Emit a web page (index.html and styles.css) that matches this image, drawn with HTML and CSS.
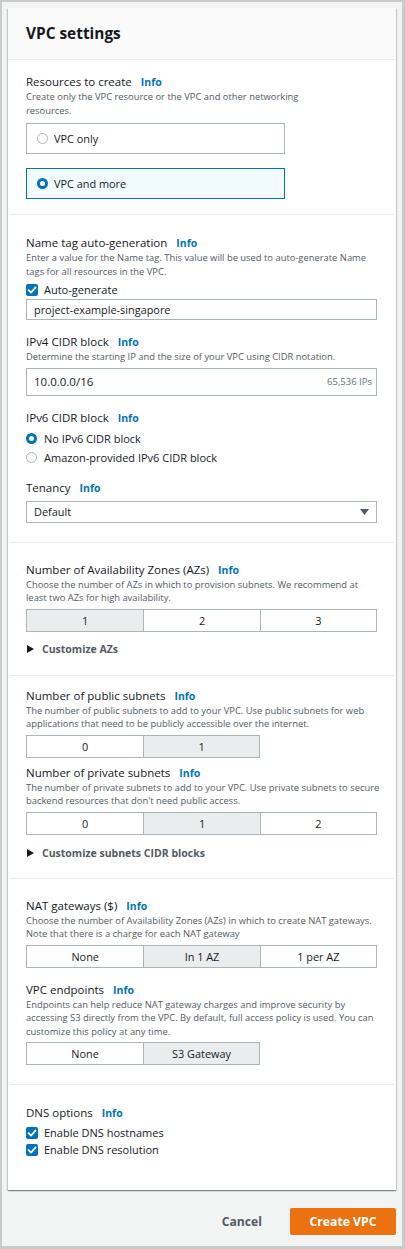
FILE: index.html
```html
<!DOCTYPE html>
<html lang="en">
<head>
<meta charset="utf-8">
<title>VPC settings</title>
<link rel="stylesheet" href="styles.css">
</head>
<body>
<div class="frame">
  <div class="card">
    <div class="card-header"><h2 class="title">VPC settings</h2></div>

    <div class="section s1">
      <div class="label-row"><span class="label">Resources to create</span><a class="info">Info</a></div>
      <div class="desc">Create only the VPC resource or the VPC and other networking<br>resources.</div>
      <div class="tile t1"><span class="radio"></span><span>VPC only</span></div>
      <div class="tile t2 selected"><span class="radio on"></span><span>VPC and more</span></div>
    </div>

    <div class="section s2">
      <div class="label-row"><span class="label">Name tag auto-generation</span><a class="info">Info</a></div>
      <div class="desc">Enter a value for the Name tag. This value will be used to auto-generate Name<br>tags for all resources in the VPC.</div>
      <div class="check-row cr1"><span class="checkbox"><svg viewBox="0 0 12 12" width="12" height="12"><path d="M2.6 6.2 L5 8.6 L9.6 3.4" fill="none" stroke="#fff" stroke-width="1.8" stroke-linecap="round" stroke-linejoin="round"/></svg></span><span>Auto-generate</span></div>
      <div class="input in1">project-example-singapore</div>
      <div class="label-row mt13"><span class="label">IPv4 CIDR block</span><a class="info">Info</a></div>
      <div class="desc">Determine the starting IP and the size of your VPC using CIDR notation.</div>
      <div class="input in2"><span class="cidr">10.0.0.0/16</span><span class="ips">65,536 IPs</span></div>
      <div class="label-row mt13"><span class="label">IPv6 CIDR block</span><a class="info">Info</a></div>
      <div class="radio-list">
        <div class="radio-row"><span class="radio on"></span><span>No IPv6 CIDR block</span></div>
        <div class="radio-row"><span class="radio"></span><span>Amazon-provided IPv6 CIDR block</span></div>
      </div>
      <div class="label-row mt12"><span class="label">Tenancy</span><a class="info">Info</a></div>
      <div class="select"><span>Default</span><svg viewBox="0 0 9 6" width="9" height="6"><path d="M0 0 H9 L4.5 6 Z" fill="#545b64"/></svg></div>
    </div>

    <div class="section s3">
      <div class="label-row"><span class="label">Number of Availability Zones (AZs)</span><a class="info">Info</a></div>
      <div class="desc">Choose the number of AZs in which to provision subnets. We recommend at<br>least two AZs for high availability.</div>
      <div class="seg">
        <div class="seg-item active">1</div>
        <div class="seg-item">2</div>
        <div class="seg-item">3</div>
      </div>
      <div class="expander"><svg viewBox="0 0 7 8" width="7" height="8"><path d="M0 0 L7 4 L0 8 Z" fill="#16191f"/></svg><span>Customize AZs</span></div>
    </div>

    <div class="section s4">
      <div class="label-row"><span class="label">Number of public subnets</span><a class="info">Info</a></div>
      <div class="desc">The number of public subnets to add to your VPC. Use public subnets for web<br>applications that need to be publicly accessible over the internet.</div>
      <div class="seg two">
        <div class="seg-item">0</div>
        <div class="seg-item active">1</div>
      </div>
      <div class="label-row mt6"><span class="label">Number of private subnets</span><a class="info">Info</a></div>
      <div class="desc">The number of private subnets to add to your VPC. Use private subnets to secure<br>backend resources that don't need public access.</div>
      <div class="seg">
        <div class="seg-item">0</div>
        <div class="seg-item active">1</div>
        <div class="seg-item">2</div>
      </div>
      <div class="expander ex2"><svg viewBox="0 0 7 8" width="7" height="8"><path d="M0 0 L7 4 L0 8 Z" fill="#16191f"/></svg><span>Customize subnets CIDR blocks</span></div>
    </div>

    <div class="section s5">
      <div class="label-row"><span class="label">NAT gateways ($)</span><a class="info">Info</a></div>
      <div class="desc">Choose the number of Availability Zones (AZs) in which to create NAT gateways.<br>Note that there is a charge for each NAT gateway</div>
      <div class="seg">
        <div class="seg-item">None</div>
        <div class="seg-item active">In 1 AZ</div>
        <div class="seg-item">1 per AZ</div>
      </div>
      <div class="label-row mt13"><span class="label">VPC endpoints</span><a class="info">Info</a></div>
      <div class="desc">Endpoints can help reduce NAT gateway charges and improve security by<br>accessing S3 directly from the VPC. By default, full access policy is used. You can<br>customize this policy at any time.</div>
      <div class="seg two">
        <div class="seg-item">None</div>
        <div class="seg-item active">S3 Gateway</div>
      </div>
    </div>

    <div class="section s6">
      <div class="label-row"><span class="label">DNS options</span><a class="info">Info</a></div>
      <div class="check-list">
        <div class="check-row"><span class="checkbox"><svg viewBox="0 0 12 12" width="12" height="12"><path d="M2.6 6.2 L5 8.6 L9.6 3.4" fill="none" stroke="#fff" stroke-width="1.8" stroke-linecap="round" stroke-linejoin="round"/></svg></span><span>Enable DNS hostnames</span></div>
        <div class="check-row"><span class="checkbox"><svg viewBox="0 0 12 12" width="12" height="12"><path d="M2.6 6.2 L5 8.6 L9.6 3.4" fill="none" stroke="#fff" stroke-width="1.8" stroke-linecap="round" stroke-linejoin="round"/></svg></span><span>Enable DNS resolution</span></div>
      </div>
    </div>
  </div>

  <div class="footer">
    <button class="btn-link">Cancel</button>
    <button class="btn-primary">Create VPC</button>
  </div>
</div>
</body>
</html>
```

FILE: styles.css
```css
* { box-sizing: border-box; }
html, body { margin: 0; padding: 0; }
body {
  font-family: "Open Sans", "Noto Sans", Arial, sans-serif;
  color: #16191f;
  background: #ffffff;
}
.frame {
  width: 405px;
  height: 1249px;
  border-style: solid;
  border-color: #c9cbcb;
  border-width: 2px 3px 3px 2px;
  background: #f2f3f3;
  padding: 6px;
}
.card {
  background: #ffffff;
  box-shadow: 0 1px 1px 0 rgba(0, 28, 36, 0.3), 1px 1px 1px 0 rgba(0, 28, 36, 0.15), -1px 1px 1px 0 rgba(0, 28, 36, 0.15);
}
.card-header {
  height: 52px;
  background: #fafafa;
  border-bottom: 1px solid #eaeded;
  padding-left: 18px;
  display: flex;
  align-items: center;
}
.title {
  margin: 0;
  font-size: 15.4px;
  font-weight: 700;
  line-height: 20px;
  color: #16191f;
}
.section {
  margin: 0 2px;
  padding-left: 16px;
  padding-right: 17px;
}
.section + .section { border-top: 1px solid #eaeded; }
.s1 { padding-top: 13px; padding-bottom: 15px; }
.s2 { padding-top: 19px; padding-bottom: 19px; }
.s3 { padding-top: 18px; padding-bottom: 17px; }
.s4 { padding-top: 11px; padding-bottom: 16px; }
.s5 { padding-top: 18px; padding-bottom: 19px; }
.s6 { padding-top: 19px; padding-bottom: 32px; }

.label-row {
  display: flex;
  align-items: baseline;
  gap: 9px;
  height: 17px;
  line-height: 17px;
}
.label { font-size: 11.5px; color: #16191f; }
.info { font-size: 10.5px; font-weight: 700; color: #0073bb; }
.mt13 { margin-top: 13px; }
.mt12 { margin-top: 12px; }
.mt6 { margin-top: 6px; }
.desc {
  font-size: 9.4px;
  line-height: 13.5px;
  color: #545b64;
  margin-right: -8px;
}
.tile {
  width: 259px;
  height: 31px;
  border: 1px solid #aab7b8;
  display: flex;
  align-items: center;
  gap: 6px;
  padding-left: 10px;
  font-size: 10.9px;
}
.t1 { margin-top: 6px; }
.t2 { margin-top: 14px; }
.tile.selected { border-color: #0073bb; background: #f1faff; }
.radio {
  width: 11px;
  height: 11px;
  border-radius: 50%;
  border: 1px solid #aab7b8;
  background: #fff;
  flex: none;
}
.radio.on { border: 3.5px solid #0073bb; }
.check-row {
  display: flex;
  align-items: center;
  gap: 6px;
  height: 17px;
  font-size: 11px;
}
.cr1 { margin-top: 3px; }
.checkbox {
  width: 12px;
  height: 12px;
  border-radius: 2px;
  background: #0073bb;
  flex: none;
  display: flex;
}
.input {
  width: 351px;
  border: 1px solid #aab7b8;
  display: flex;
  align-items: center;
  padding-left: 7px;
  padding-right: 4px;
}
.in1 { margin-top: 1px; height: 21px; font-size: 10.9px; }
.in2 { margin-top: 4px; height: 28px; justify-content: space-between; }
.cidr { font-size: 11.5px; }
.ips { font-size: 9.5px; color: #687078; }
.radio-list { margin-top: 3px; }
.radio-row {
  display: flex;
  align-items: center;
  gap: 7px;
  height: 19px;
  font-size: 11px;
}
.select {
  margin-top: 5px;
  width: 351px;
  height: 22px;
  border: 1px solid #aab7b8;
  display: flex;
  align-items: center;
  justify-content: space-between;
  padding-left: 7px;
  padding-right: 7px;
  font-size: 10.9px;
}
.seg {
  margin-top: 4px;
  width: 351px;
  height: 23px;
  display: grid;
  grid-template-columns: repeat(3, 1fr);
  border: 1px solid #aab7b8;
}
.seg.two { width: 234px; grid-template-columns: repeat(2, 1fr); }
.seg-item {
  display: flex;
  align-items: center;
  justify-content: center;
  font-size: 10.9px;
  color: #16191f;
  background: #fff;
}
.seg-item + .seg-item { border-left: 1px solid #aab7b8; }
.seg-item.active { background: #eaeded; }
.expander {
  margin-top: 9px;
  display: flex;
  align-items: center;
  gap: 8px;
  height: 17px;
  padding-left: 1px;
  font-size: 10.5px;
  font-weight: 700;
  color: #545b64;
}
.ex2 { margin-top: 10px; }
.check-list { margin-top: 3px; }
.footer {
  margin-top: 18px;
  height: 27px;
  display: flex;
  justify-content: flex-end;
  align-items: center;
  gap: 8px;
}
.btn-link {
  border: none;
  background: transparent;
  font-family: inherit;
  font-size: 12.2px;
  font-weight: 700;
  color: #545b64;
  padding: 0 20px;
  height: 27px;
}
.btn-primary {
  border: none;
  background: #ec7211;
  color: #fff;
  font-family: inherit;
  font-size: 12.2px;
  font-weight: 700;
  width: 106px;
  height: 27px;
  border-radius: 2px;
}
```
